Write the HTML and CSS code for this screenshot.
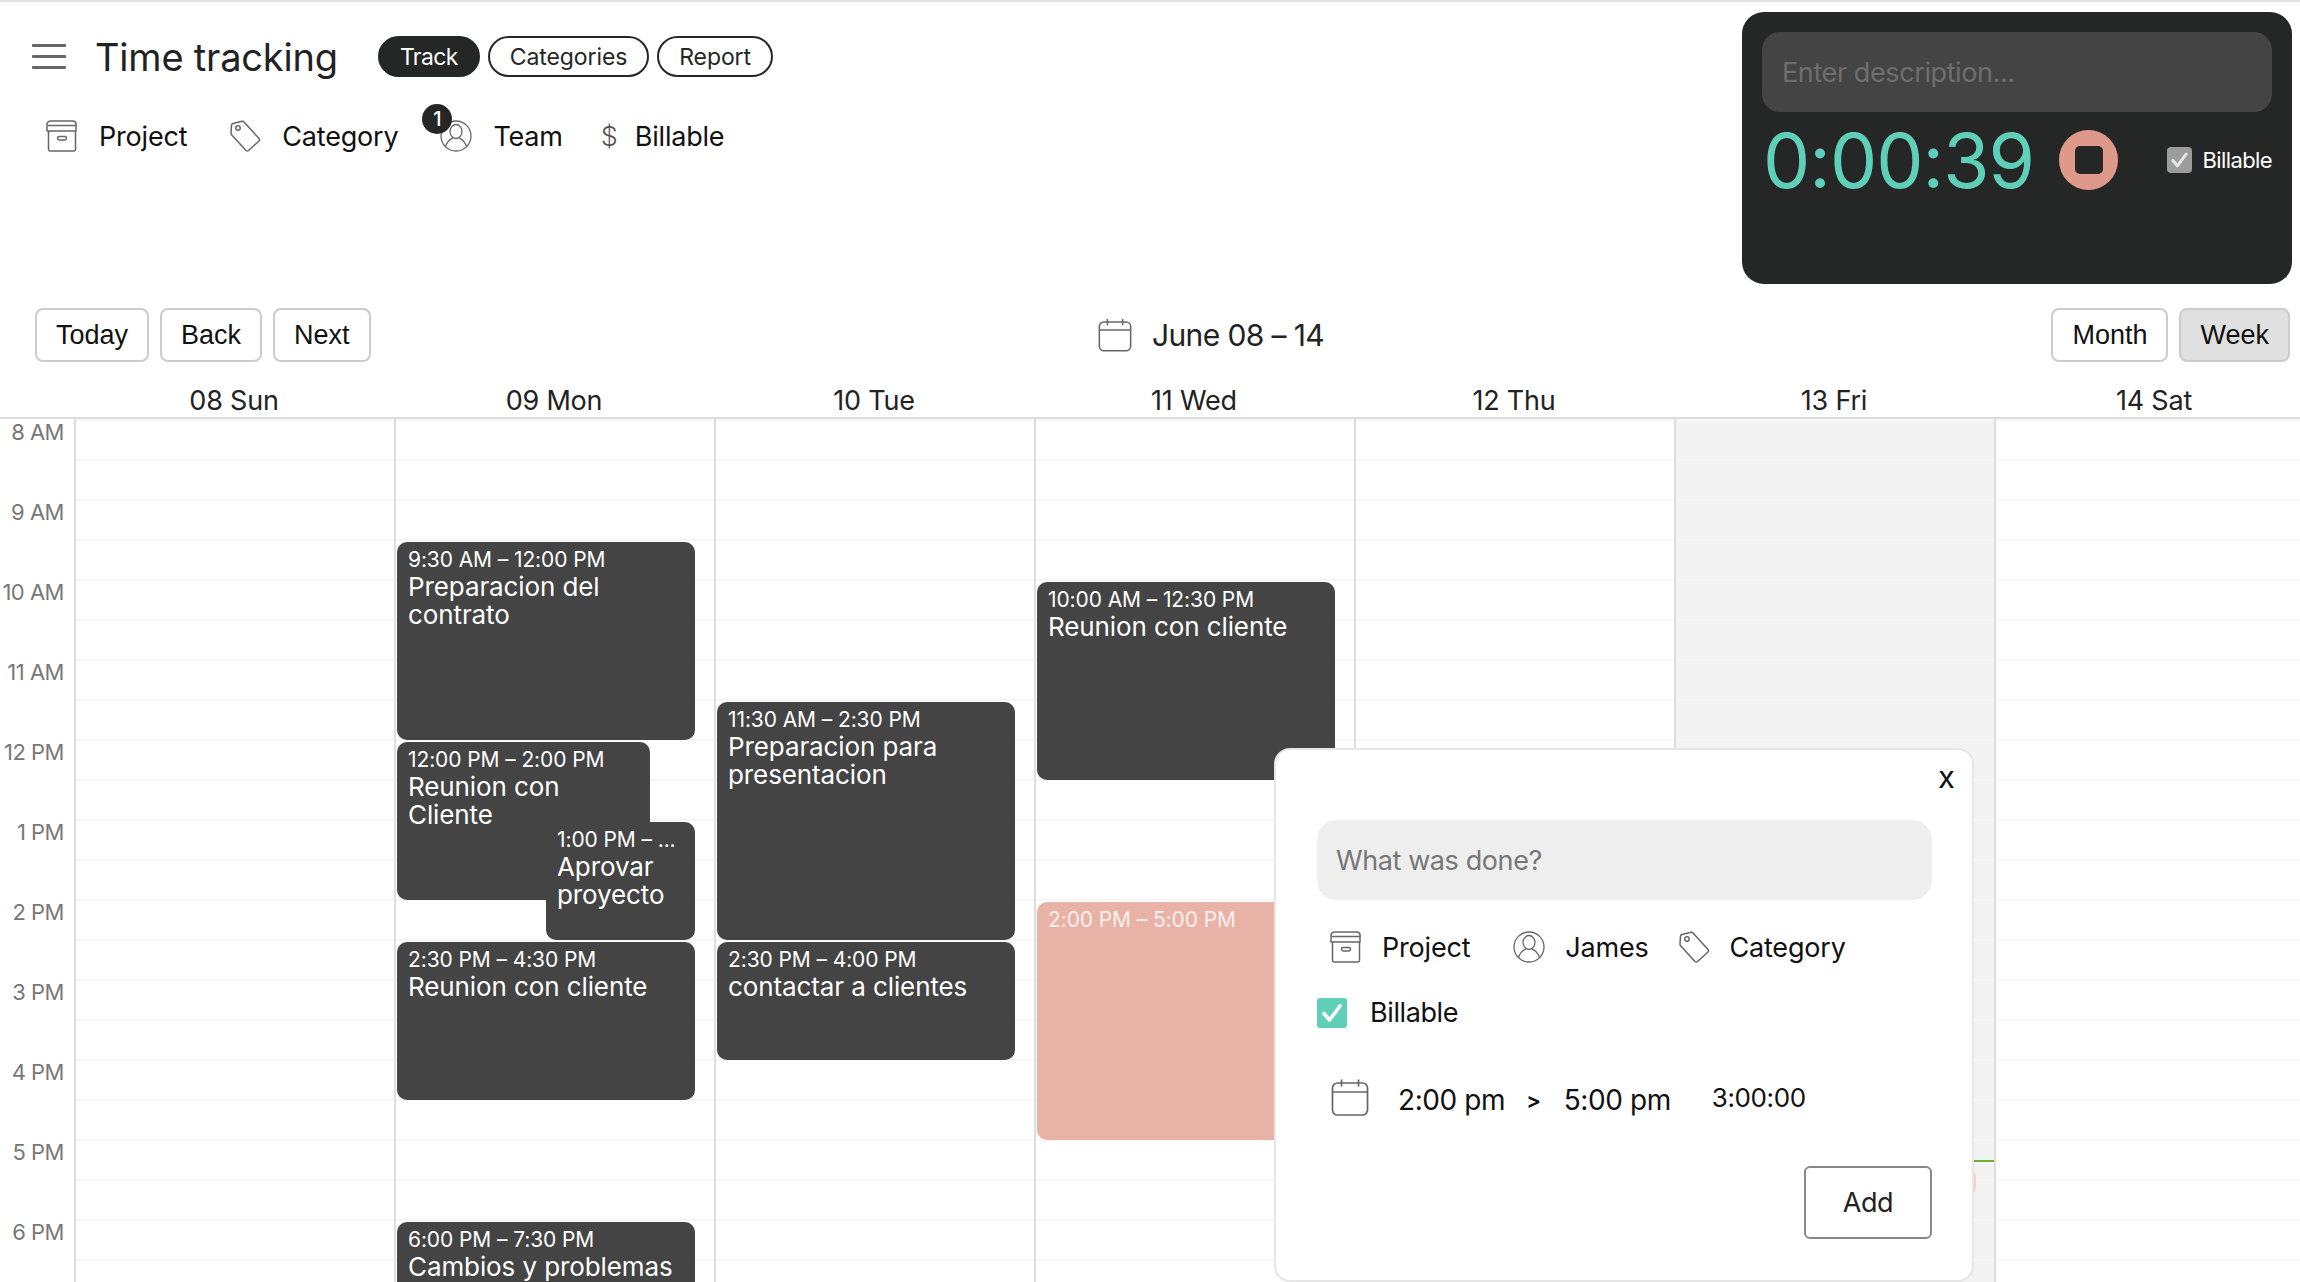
FILE: index.html
```html
<!DOCTYPE html>
<html lang="en">
<head>
<meta charset="utf-8">
<title>Time tracking</title>
<link rel="stylesheet" href="styles.css">
</head>
<body>
<svg class="defs" width="0" height="0" aria-hidden="true">
  <defs>
    <symbol id="i-box" viewBox="0 0 32 32"><g fill="none" stroke="#666" stroke-width="1.5" stroke-linejoin="round"><path d="M5 1h22q2.500 0 3 2.500v7.500h-29V3.500Q2 1 5 1z"/><path d="M1.500 5.500h29"/><path d="M2.500 11v18.500a1.500 1.500 0 0 0 1.500 1.500h24a1.500 1.500 0 0 0 1.500-1.500V11"/><rect x="11.500" y="16.500" width="9" height="3.500" rx="1.700"/></g></symbol>
    <symbol id="i-tag" viewBox="0 0 32 32"><g fill="none" stroke="#666" stroke-width="1.500" stroke-linejoin="round"><path d="M4 3.500 13 1.300q1.200-.2 2 .7l15 16.500q1.200 1.300 0 2.500L19.500 30.500q-1.300 1.100-2.500 0L2.800 15q-.8-.8-.8-2L2.500 5.200Q2.600 3.900 4 3.500z"/><circle cx="9" cy="8" r="2.200"/></g></symbol>
    <symbol id="i-user" viewBox="0 0 32 32"><g fill="none" stroke="#666" stroke-width="1.300"><circle cx="16" cy="16" r="15"/><ellipse cx="16" cy="11.500" rx="6" ry="7"/><path d="M5.500 27c1-5 4-7.500 7.500-9.200M26.500 27c-1-5-4-7.500-7.500-9.200"/></g></symbol>
    <symbol id="i-cal" viewBox="0 0 38 38"><g fill="none" stroke="#666" stroke-width="1.700"><rect x="1.500" y="4.500" width="35" height="32" rx="5"/><path d="M1.500 13.500h35M10.500 1v7M27.500 1v7"/></g></symbol>
    <symbol id="i-check" viewBox="0 0 30 30"><path d="M7 15.500 12.500 22 23 8" fill="none" stroke="#fff" stroke-width="3.600" stroke-linecap="round" stroke-linejoin="round"/></symbol>
  </defs>
</svg>

<header class="topbar">
  <div class="topbar-left">
    <div class="title-row">
      <div class="burger"><span></span><span></span><span></span></div>
      <h1 class="title">Time tracking</h1>
      <nav class="pills">
        <a class="pill pill-active">Track</a>
        <a class="pill">Categories</a>
        <a class="pill">Report</a>
      </nav>
    </div>
    <div class="filters">
      <div class="meta"><svg class="ico"><use href="#i-box"/></svg><span>Project</span></div>
      <div class="meta"><svg class="ico"><use href="#i-tag"/></svg><span>Category</span></div>
      <div class="meta"><span class="badge-wrap"><svg class="ico"><use href="#i-user"/></svg><b class="badge">1</b></span><span>Team</span></div>
      <div class="meta"><span class="dollar">$</span><span>Billable</span></div>
    </div>
  </div>
  <section class="timer">
    <div class="timer-input">Enter description...</div>
    <div class="timer-row">
      <div class="timer-clock">0:00:39</div>
      <button class="stop"><span></span></button>
      <div class="timer-bill"><span class="timer-check"><svg><use href="#i-check"/></svg></span><span>Billable</span></div>
    </div>
  </section>
</header>

<div class="toolbar">
  <div class="btn-group">
    <button class="btn">Today</button>
    <button class="btn">Back</button>
    <button class="btn">Next</button>
  </div>
  <div class="range"><svg class="range-ico"><use href="#i-cal"/></svg><span>June 08 – 14</span></div>
  <div class="btn-group">
    <button class="btn">Month</button>
    <button class="btn btn-on">Week</button>
  </div>
</div>

<div class="days">
  <div>08 Sun</div><div>09 Mon</div><div>10 Tue</div><div>11 Wed</div><div>12 Thu</div><div>13 Fri</div><div>14 Sat</div>
</div>

<main class="cal">
  <div class="hours">
    <div>8 AM</div><div>9 AM</div><div>10 AM</div><div>11 AM</div><div>12 PM</div><div>1 PM</div><div>2 PM</div><div>3 PM</div><div>4 PM</div><div>5 PM</div><div>6 PM</div>
  </div>
  <div class="col"></div>
  <div class="col">
    <article class="ev" style="top:123px;height:198px"><time>9:30 AM – 12:00 PM</time><p>Preparacion del contrato</p></article>
    <article class="ev ev-short" style="top:323px;height:158px"><time>12:00 PM – 2:00 PM</time><p>Reunion con Cliente</p></article>
    <article class="ev ev-side" style="top:403px;height:118px"><time>1:00 PM – ...</time><p>Aprovar proyecto</p></article>
    <article class="ev" style="top:523px;height:158px"><time>2:30 PM – 4:30 PM</time><p>Reunion con cliente</p></article>
    <article class="ev" style="top:803px;height:118px"><time>6:00 PM – 7:30 PM</time><p>Cambios y problemas</p></article>
  </div>
  <div class="col">
    <article class="ev" style="top:283px;height:238px"><time>11:30 AM – 2:30 PM</time><p>Preparacion para presentacion</p></article>
    <article class="ev" style="top:523px;height:118px"><time>2:30 PM – 4:00 PM</time><p>contactar a clientes</p></article>
  </div>
  <div class="col">
    <article class="ev" style="top:163px;height:198px"><time>10:00 AM – 12:30 PM</time><p>Reunion con cliente</p></article>
    <article class="ev ev-draft" style="top:483px;height:238px"><time>2:00 PM – 5:00 PM</time></article>
  </div>
  <div class="col"></div>
  <div class="col col-today">
    <article class="ev ev-ghost" style="top:748px;height:30px"></article>
    <div class="now"></div>
  </div>
  <div class="col"></div>
</main>

<aside class="pop">
  <span class="pop-close">x</span>
  <div class="pop-input">What was done?</div>
  <div class="pop-meta">
    <div class="meta meta-project"><svg class="ico"><use href="#i-box"/></svg><span>Project</span></div>
    <div class="meta"><svg class="ico"><use href="#i-user"/></svg><span>James</span></div>
    <div class="meta"><svg class="ico"><use href="#i-tag"/></svg><span>Category</span></div>
  </div>
  <div class="pop-bill"><span class="pop-check"><svg><use href="#i-check"/></svg></span><span>Billable</span></div>
  <div class="pop-time">
    <svg class="pop-cal"><use href="#i-cal"/></svg>
    <span class="clock">2:00 pm</span><span class="arrow">&gt;</span><span class="clock">5:00 pm</span><span class="dur">3:00:00</span>
  </div>
  <div class="pop-foot"><button class="add">Add</button></div>
</aside>
</body>
</html>
```
FILE: styles.css
```css
* { box-sizing: border-box; }
html, body { margin: 0; padding: 0; }
body {
  width: 2300px;
  height: 1282px;
  overflow: hidden;
  position: relative;
  background: #fff;
  border-top: 2px solid #e2e2e2;
  font-family: Inter, "Noto Sans", sans-serif;
  color: #111;
}
.defs { position: absolute; }

/* top */
.topbar { display: flex; justify-content: space-between; height: 282px; padding: 10px 8px 0 0; }
.topbar-left { padding: 24px 0 0 32px; }
.title-row { display: flex; align-items: center; height: 41px; }
.burger { width: 34px; display: flex; flex-direction: column; gap: 8px; }
.burger span { height: 3px; background: #666; border-radius: 1px; }
.title { margin: 0 40px 0 29px; font-size: 38px; font-weight: 400; letter-spacing: -0.2px; color: #222; white-space: nowrap; }
.pills { display: flex; gap: 8px; }
.pill {
  height: 41px; padding: 0 20px; border: 2px solid #252626; border-radius: 21px;
  display: flex; align-items: center; font-size: 23px; letter-spacing: -0.1px; color: #252626;
}
.pill-active { background: #252626; color: #fff; letter-spacing: -0.6px; }

.filters { display: flex; gap: 42px; margin: 43px 0 0 14px; }
.meta { display: flex; align-items: center; gap: 21px; height: 32px; font-size: 27px; letter-spacing: -0.2px; }
.ico { width: 32px; height: 32px; display: block; flex: none; }
.badge-wrap { position: relative; display: block; }
.badge {
  position: absolute; left: -18px; top: -16px; width: 30px; height: 30px; border-radius: 50%;
  background: #252626; color: #fff; font-size: 20px; font-weight: 500; letter-spacing: 0;
  display: flex; align-items: center; justify-content: center;
}
.dollar { width: 13px; margin: 0 -2px; font-size: 27px; font-weight: 300; color: #555; display: flex; justify-content: center; }

/* timer */
.timer { width: 550px; height: 272px; background: #252626; border-radius: 22px; padding: 20px; }
.timer-input {
  height: 80px; background: #444; border-radius: 18px; padding: 0 20px;
  display: flex; align-items: center; font-size: 27px; letter-spacing: -0.4px; color: #6e6e6e;
}
.timer-row { display: flex; align-items: center; height: 60px; margin-top: 18px; }
.timer-clock { width: 299px; padding: 2px 0 0 1px; font-size: 75px; font-weight: 400; letter-spacing: -1px; color: #5fcfb8; line-height: 60px; white-space: nowrap; }
.stop { width: 60px; height: 60px; border: 0; padding: 0; border-radius: 50%; background: #df998b; display: flex; align-items: center; justify-content: center; }
.stop span { width: 28px; height: 28px; border-radius: 5px; background: #252626; }
.timer-bill { display: flex; align-items: center; gap: 10px; margin-left: 49px; font-size: 22px; letter-spacing: -0.6px; color: #fff; white-space: nowrap; }
.timer-check { width: 25px; height: 26px; background: #9c9c9c; border-radius: 4px; display: block; }
.timer-check svg { width: 25px; height: 26px; display: block; opacity: .75; }

/* toolbar */
.toolbar { display: flex; justify-content: space-between; align-items: center; height: 54px; margin-top: 24px; padding: 0 10px 0 35px; }
.btn-group { display: flex; gap: 11px; }
.btn {
  height: 54px; padding: 0 19px; background: #fff; border: 2px solid #ccc; border-radius: 8px;
  font-family: "Liberation Sans", Arial, sans-serif; font-size: 27px; color: #111;
}
.btn-on { background: #e0e0e0; }
.range { display: flex; align-items: center; gap: 20px; font-size: 30px; letter-spacing: -0.6px; color: #222; }
.range-ico { width: 34px; height: 34px; display: block; }

/* days */
.days {
  display: flex; width: 2314px; height: 57px; padding: 23px 0 0 74px; border-bottom: 2px solid #ddd;
  font-size: 27px; line-height: 32px; letter-spacing: -0.2px; color: #222;
}
.days div { width: 320px; flex: none; text-align: center; }

/* calendar */
.cal { display: flex; width: 2314px; height: 900px; }
.hours { width: 74px; flex: none; color: #777; font-size: 22px; letter-spacing: -0.5px; text-align: right; }
.hours div { height: 80px; padding-right: 10px; line-height: 26px; }
.col {
  width: 320px; flex: none; position: relative; border-left: 2px solid #ddd;
  background-image: repeating-linear-gradient(#f6f6f6 0 2px, transparent 2px 40px);
}
.col-today { background-color: #f3f3f3; }
.now { position: absolute; left: 0; right: 0; top: 741px; height: 2px; background: #74ad31; }
.ev {
  position: absolute; left: 1px; width: 298px; padding: 5px 11px; background: #444; color: #fff;
  border-radius: 10px; overflow: hidden;
}
.ev time { display: block; font-size: 21px; line-height: 26px; letter-spacing: -0.1px; white-space: nowrap; }
.ev p { margin: 0; font-size: 26px; line-height: 28px; letter-spacing: -0.1px; }
.ev-short { width: 253px; }
.ev-side { left: 150px; width: 149px; z-index: 1; }
.ev-draft { background: #e8b2a7; color: #fdf0ed; }
.ev-ghost { background: #f6cfc7; width: 300px; left: 0; }

/* popover */
.pop {
  position: absolute; left: 1274px; top: 746px; width: 700px; height: 534px; background: #fff;
  border: 2px solid #e6e6e6; border-radius: 16px; padding: 70px 40px 0 41px; z-index: 5;
}
.pop-close { position: absolute; right: 17px; top: 8px; font-size: 31px; color: #111; }
.pop-input {
  height: 80px; background: #eee; border-radius: 20px; padding: 0 19px;
  display: flex; align-items: center; font-size: 27px; letter-spacing: -0.4px; color: #777;
}
.pop-meta { display: flex; margin: 31px 0 0 13px; gap: 29px; }
.pop-meta .meta { gap: 20px; }
.meta-project { margin-right: 14px; }
.pop-bill { display: flex; align-items: center; gap: 23px; margin-top: 33px; font-size: 27px; letter-spacing: -0.4px; }
.pop-check { width: 30px; height: 30px; background: #5fcfb8; border-radius: 3px; display: block; }
.pop-check svg { width: 30px; height: 30px; display: block; }
.pop-time { display: flex; align-items: center; margin: 49px 0 0 14px; font-size: 28px; letter-spacing: -0.4px; gap: 21px; height: 39px; }
.pop-cal { width: 38px; height: 39px; display: block; margin-right: 8px; }
.clock { padding-top: 4px; }
.arrow { font-size: 22px; font-weight: 600; padding: 5px 2px 0 0; }
.dur { margin-left: 20px; font-size: 26px; }
.pop-foot { display: flex; justify-content: flex-end; margin-top: 49px; }
.add { width: 128px; height: 73px; background: #fff; border: 2px solid #888; border-radius: 6px; font-family: inherit; font-size: 27px; letter-spacing: -0.4px; color: #222; }
```
